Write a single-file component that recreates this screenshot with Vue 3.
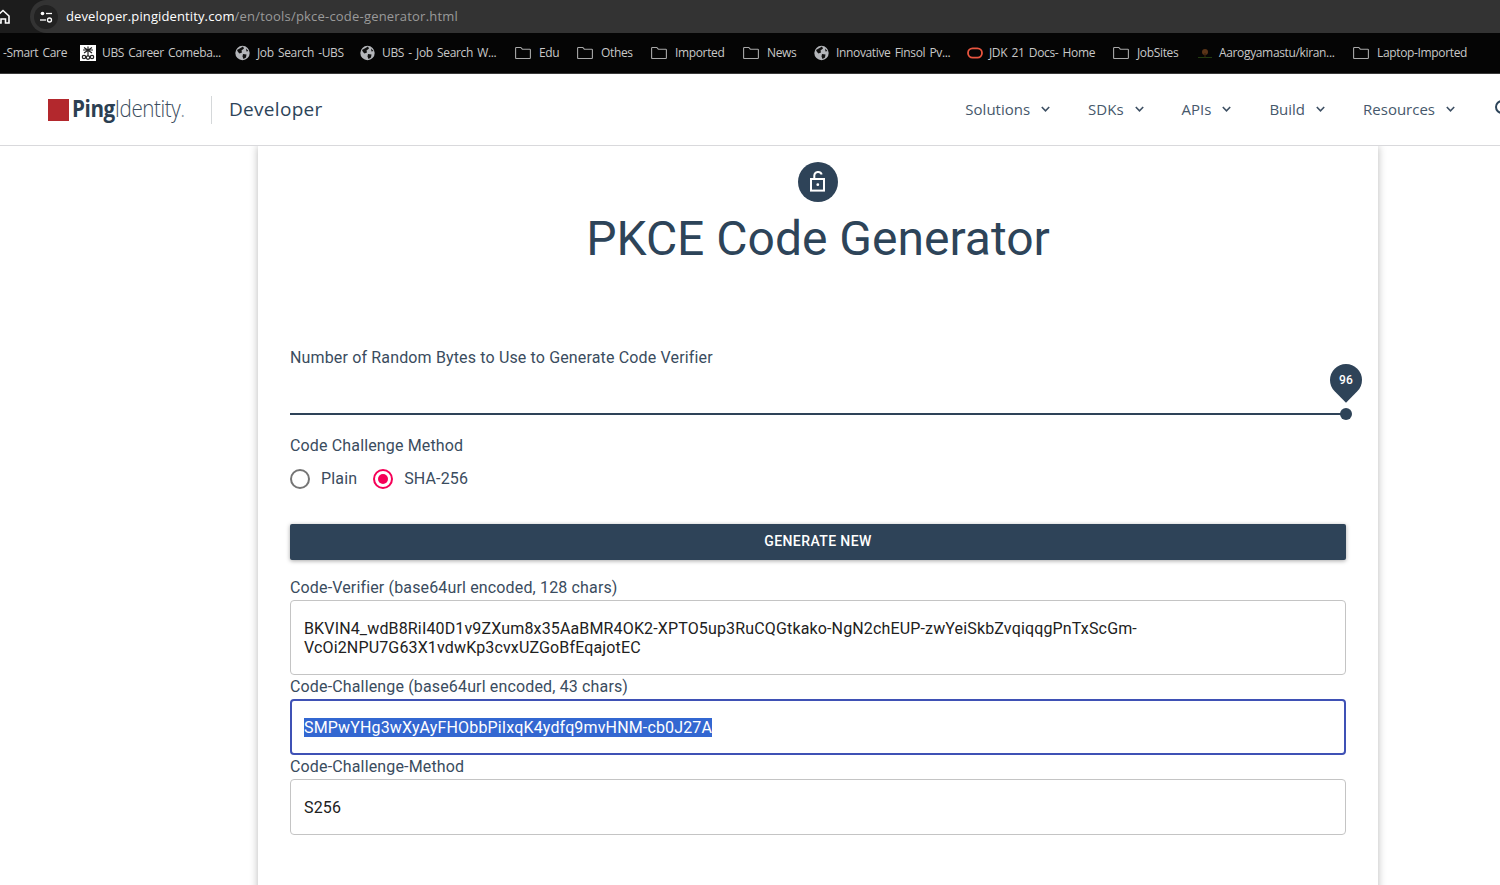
<template>
  <div class="page">
    <!-- browser chrome -->
    <div class="address-row">
      <div class="home-btn">
        <svg width="16" height="16" viewBox="0 0 16 16" fill="none" stroke="#fff" stroke-width="1.6">
          <path d="M-3 7 L3 1.5 L9 7 V14 H5.5 V10 H1 V14 H-3 Z" />
        </svg>
      </div>
      <div class="url-pill">
        <span class="site-info">
          <svg width="16" height="16" viewBox="0 0 16 16" fill="none" stroke="#fff" stroke-width="1.3">
            <circle cx="4.5" cy="4.5" r="1.8" fill="#fff" stroke="none" />
            <path d="M8 4.5 H14" />
            <path d="M2 11 H8" />
            <circle cx="11.5" cy="11" r="2" />
          </svg>
        </span>
        <span class="url"><span class="url-host">developer.pingidentity.com</span>/en/tools/pkce-code-generator.html</span>
      </div>
    </div>
    <div class="bookmarks">
      <div v-for="b in bookmarks" :key="b.label" class="bookmark" :style="{ width: b.width + 'px' }">
        <svg v-if="b.icon === 'folder'" class="bm-icon folder" viewBox="0 0 16 16" fill="none" stroke="#a8a8a8" stroke-width="1.1">
          <path d="M0.6 3.2 Q0.6 2.5 1.3 2.5 H5.8 L7.3 4.2 H14.7 Q15.4 4.2 15.4 4.9 V12.8 Q15.4 13.5 14.7 13.5 H1.3 Q0.6 13.5 0.6 12.8 Z" />
        </svg>
        <svg v-else-if="b.icon === 'globe'" class="bm-icon" viewBox="0 0 16 16">
          <circle cx="7.5" cy="8" r="7.2" fill="#b4b6ba" />
          <path d="M2 5 L5.5 3 L8 1.6 L9 3.5 L6.5 5.5 L7 7.5 L4.5 8.5 L3 7 Z M8 9 L11.5 9.5 L11 12.5 L8.5 14 L7.5 11.5 Z M11 3.5 L13.5 6 L11.5 6.5 Z" fill="#101010" />
        </svg>
        <svg v-else-if="b.icon === 'oracle'" class="bm-icon" viewBox="0 0 16 16" fill="none" stroke="#e8553f" stroke-width="1.8">
          <rect x="1" y="3.4" width="14" height="9.2" rx="4.6" />
        </svg>
        <svg v-else-if="b.icon === 'ubs'" class="bm-icon" viewBox="0 0 16 16">
          <rect width="16" height="16" fill="#fff" />
          <g fill="none" stroke="#222" stroke-width="1.2">
            <path d="M8 1.5 V11 M3 5 L13 5 M4 2.5 L12 8 M12 2.5 L4 8" />
            <circle cx="4" cy="12" r="1.7" />
            <circle cx="8" cy="12.6" r="1.7" />
            <circle cx="12" cy="12" r="1.7" />
          </g>
        </svg>
        <svg v-else-if="b.icon === 'tree'" class="bm-icon" viewBox="0 0 16 16">
          <path d="M1 12.5 H15" stroke="#2a4a12" stroke-width="0.8" />
          <circle cx="8" cy="7" r="3" fill="#5a3418" />
          <rect x="7.4" y="8" width="1.2" height="4.5" fill="#3a2410" />
        </svg>
        <span class="bm-label">{{ b.label }}</span>
      </div>
    </div>

    <!-- site header -->
    <header class="site-header">
      <div class="logo">
        <span class="logo-mark"></span>
        <span class="logo-text"><b>Ping</b>Identity<i>.</i></span>
      </div>
      <span class="divider"></span>
      <span class="brand-sub">Developer</span>
      <nav class="nav">
        <a v-for="item in navItems" :key="item" class="nav-item">
          {{ item }}
          <svg width="9" height="6" viewBox="0 0 9 6" fill="none" stroke="#3d4f63" stroke-width="1.6">
            <path d="M0.8 1 L4.5 4.8 L8.2 1" />
          </svg>
        </a>
        <svg class="search" width="20" height="20" viewBox="0 0 20 20" fill="none" stroke="#2d4459" stroke-width="2">
          <circle cx="8" cy="8" r="6" />
          <path d="M12.5 12.5 L18 18" />
        </svg>
      </nav>
    </header>

    <!-- main card -->
    <main class="content">
      <section class="card">
        <div class="lock-badge">
          <svg width="20" height="20" viewBox="0 0 20 20" fill="none" stroke="#fff" stroke-width="2">
            <rect x="3" y="7" width="13" height="11.6" />
            <path d="M6.3 7 V3.5 A3.8 3.8 0 0 1 13.7 2.5" />
            <circle cx="9.8" cy="12.7" r="1.4" fill="#fff" stroke="none" />
          </svg>
        </div>
        <h1 class="title">PKCE Code Generator</h1>

        <label class="label bytes-label">Number of Random Bytes to Use to Generate Code Verifier</label>
        <div class="slider">
          <div class="slider-track"></div>
          <div class="slider-thumb"></div>
          <div class="slider-pin"><span>96</span></div>
        </div>

        <label class="label method-label">Code Challenge Method</label>
        <div class="radios">
          <span class="radio"></span>
          <span class="radio-text">Plain</span>
          <span class="radio checked"></span>
          <span class="radio-text">SHA-256</span>
        </div>

        <button class="generate">GENERATE NEW</button>

        <label class="label field-label first">Code-Verifier (base64url encoded, 128 chars)</label>
        <div class="field multi">BKVIN4_wdB8RiI40D1v9ZXum8x35AaBMR4OK2-XPTO5up3RuCQGtkako-NgN2chEUP-zwYeiSkbZvqiqqgPnTxScGm-<br />VcOi2NPU7G63X1vdwKp3cvxUZGoBfEqajotEC</div>

        <label class="label field-label">Code-Challenge (base64url encoded, 43 chars)</label>
        <div class="field focused"><span class="selected">SMPwYHg3wXyAyFHObbPiIxqK4ydfq9mvHNM-cb0J27A</span></div>

        <label class="label field-label">Code-Challenge-Method</label>
        <div class="field">S256</div>
      </section>
    </main>
  </div>
</template>

<script setup>
const bookmarks = [
  { label: '-Smart Care', width: 77, icon: null },
  { label: 'UBS Career Comeba...', width: 155, icon: 'ubs' },
  { label: 'Job Search -UBS', width: 125, icon: 'globe' },
  { label: 'UBS - Job Search W...', width: 155, icon: 'globe' },
  { label: 'Edu', width: 62, icon: 'folder' },
  { label: 'Othes', width: 74, icon: 'folder' },
  { label: 'Imported', width: 92, icon: 'folder' },
  { label: 'News', width: 71, icon: 'folder' },
  { label: 'Innovative Finsol Pv...', width: 153, icon: 'globe' },
  { label: 'JDK 21 Docs- Home', width: 146, icon: 'oracle' },
  { label: 'JobSites', width: 84, icon: 'folder' },
  { label: 'Aarogyamastu/kiran...', width: 156, icon: 'tree' },
  { label: 'Laptop-Imported', width: 130, icon: 'folder' },
]

const navItems = ['Solutions', 'SDKs', 'APIs', 'Build', 'Resources']
</script>

<style>
html, body {
  margin: 0;
  background: #fff;
  overflow: hidden;
}
</style>

<style scoped>
.page {
  width: 1500px;
  height: 885px;
  overflow: hidden;
  font-family: Roboto, "Liberation Sans", sans-serif;
  background: #fff;
}

/* browser chrome */
.address-row {
  height: 33px;
  display: flex;
  background: #1c1c1c;
}
.home-btn {
  width: 30px;
  display: flex;
  align-items: center;
}
.home-btn svg {
  overflow: visible;
}
.url-pill {
  flex: 1;
  display: flex;
  align-items: center;
  background: #333;
  border-radius: 17px 0 0 17px;
  padding-left: 4px;
}
.site-info {
  width: 24px;
  height: 24px;
  border-radius: 50%;
  background: #222;
  display: flex;
  align-items: center;
  justify-content: center;
  margin-right: 8px;
}
.url {
  font-family: "Open Sans", sans-serif;
  font-size: 13px;
  letter-spacing: 0.2px;
  color: #9a9a9a;
  margin-bottom: 2px;
}
.url-host {
  color: #fff;
  letter-spacing: 0.12px;
}
.bookmarks {
  height: 40px;
  background: #050505;
  border-bottom: 1px solid #3a3a3a;
  display: flex;
  align-items: center;
  padding-left: 3px;
  font-family: "Open Sans", sans-serif;
  font-size: 12px;
  letter-spacing: -0.35px;
  word-spacing: 1.5px;
  color: #c8c8c8;
  white-space: nowrap;
}
.bookmark {
  display: flex;
  align-items: center;
  flex-shrink: 0;
}
.bm-label {
  margin-bottom: 2px;
}
.bm-icon {
  width: 16px;
  height: 16px;
  margin-right: 6px;
  flex-shrink: 0;
}
.bm-icon.folder {
  margin-right: 8px;
}

/* site header */
.site-header {
  height: 71px;
  display: flex;
  align-items: center;
  border-bottom: 1px solid #d9d9dc;
  padding-left: 48px;
  position: relative;
  z-index: 2;
  background: #fff;
}
.logo {
  display: flex;
  align-items: center;
  width: 139px;
  flex-shrink: 0;
}
.logo-mark {
  width: 21px;
  height: 22px;
  background: #b3282d;
  margin-right: 3px;
  flex-shrink: 0;
}
.logo-text {
  font-family: "Open Sans", sans-serif;
  font-size: 24px;
  font-weight: 300;
  color: #3b4d5e;
  letter-spacing: -0.5px;
  display: inline-block;
  transform: scaleX(0.86);
  transform-origin: left center;
  white-space: nowrap;
  margin-bottom: 4px;
}
.logo-text b {
  font-weight: 700;
  color: #2b3f52;
}
.logo-text i {
  font-style: normal;
  color: #8b97a3;
}
.divider {
  width: 1px;
  height: 28px;
  background: #d5d8da;
  margin: 0 17px 0 24px;
}
.brand-sub {
  font-family: "Open Sans", sans-serif;
  font-size: 19px;
  color: #2d4459;
  letter-spacing: 0.3px;
  margin-bottom: 2px;
}
.nav {
  margin-left: auto;
  display: flex;
  align-items: center;
  font-family: "Open Sans", sans-serif;
  font-size: 15px;
  color: #46586b;
  margin-right: -14px;
  margin-bottom: 2px;
}
.nav-item {
  display: flex;
  align-items: center;
  gap: 11px;
  margin-right: 38px;
}
.nav-item:last-of-type {
  margin-right: 39px;
}
.search {
  flex-shrink: 0;
}

/* card */
.content {
  display: flex;
  padding-left: 258px;
}
.card {
  width: 1056px;
  min-height: 739px;
  padding: 16px 32px 0;
  background: #fff;
  box-shadow: 0 0 8px rgba(0, 0, 0, 0.28);
  display: flex;
  flex-direction: column;
  color: #2d4459;
  letter-spacing: 0.15px;
}
.lock-badge {
  width: 40px;
  height: 40px;
  border-radius: 50%;
  background: #2e4358;
  align-self: center;
  display: flex;
  align-items: center;
  justify-content: center;
}
.lock-badge svg {
  overflow: visible;
}
.title {
  margin: 8px 0 0;
  text-align: center;
  font-size: 48px;
  font-weight: 400;
  line-height: 58px;
  letter-spacing: 0;
  color: #2d4459;
}
.label {
  display: block;
  font-size: 16px;
  line-height: 20px;
  color: #3a4c5e;
}
.bytes-label {
  margin-top: 80px;
}
.slider {
  position: relative;
  height: 40px;
  margin-top: 15px;
}
.slider-track {
  position: absolute;
  left: 0;
  right: 0;
  top: 30px;
  height: 2px;
  background: #2e4358;
}
.slider-thumb {
  position: absolute;
  right: -6px;
  top: 25px;
  width: 12px;
  height: 12px;
  border-radius: 50%;
  background: #2e4358;
}
.slider-pin {
  position: absolute;
  right: -16px;
  top: -19px;
  width: 32px;
  height: 32px;
  border-radius: 50% 50% 0 50%;
  background: #2e4358;
  transform: rotate(45deg);
  display: flex;
  align-items: center;
  justify-content: center;
}
.slider-pin span {
  transform: rotate(-45deg);
  color: #fff;
  font-size: 12px;
  font-weight: 500;
}
.method-label {
  margin-top: 13px;
}
.radios {
  display: flex;
  align-items: center;
  height: 24px;
  margin-top: 11px;
  font-size: 16px;
  color: #3a4c5e;
}
.radio {
  width: 20px;
  height: 20px;
  box-sizing: border-box;
  border: 2px solid #757575;
  border-radius: 50%;
  position: relative;
}
.radio.checked {
  border-color: #f50057;
}
.radio.checked::after {
  content: "";
  position: absolute;
  left: 3px;
  top: 3px;
  width: 10px;
  height: 10px;
  border-radius: 50%;
  background: #f50057;
}
.radio-text {
  margin-left: 11px;
  margin-right: 16px;
  margin-bottom: 2px;
}
.generate {
  margin-top: 33px;
  height: 36px;
  padding: 0 0 2px;
  border: none;
  border-radius: 2px;
  background: #2e4358;
  color: #fff;
  font-family: inherit;
  font-size: 14px;
  font-weight: 500;
  letter-spacing: 0.4px;
  box-shadow: 0 1px 4px rgba(0, 0, 0, 0.35);
}
.field-label {
  margin-top: 1px;
  height: 23px;
  line-height: 22px;
}
.field-label.first {
  margin-top: 17px;
}
.field {
  box-sizing: border-box;
  height: 56px;
  border: 1px solid #c4c4c4;
  border-radius: 4px;
  padding: 0 13px;
  display: flex;
  align-items: center;
  font-size: 16px;
  color: #212121;
}
.field.multi {
  display: block;
  height: 75px;
  padding-top: 18px;
  line-height: 19px;
}
.field.focused {
  border: 2px solid #3f51b5;
  padding: 0 12px;
}
.selected {
  background: #3367d1;
  color: #fff;
}
</style>
